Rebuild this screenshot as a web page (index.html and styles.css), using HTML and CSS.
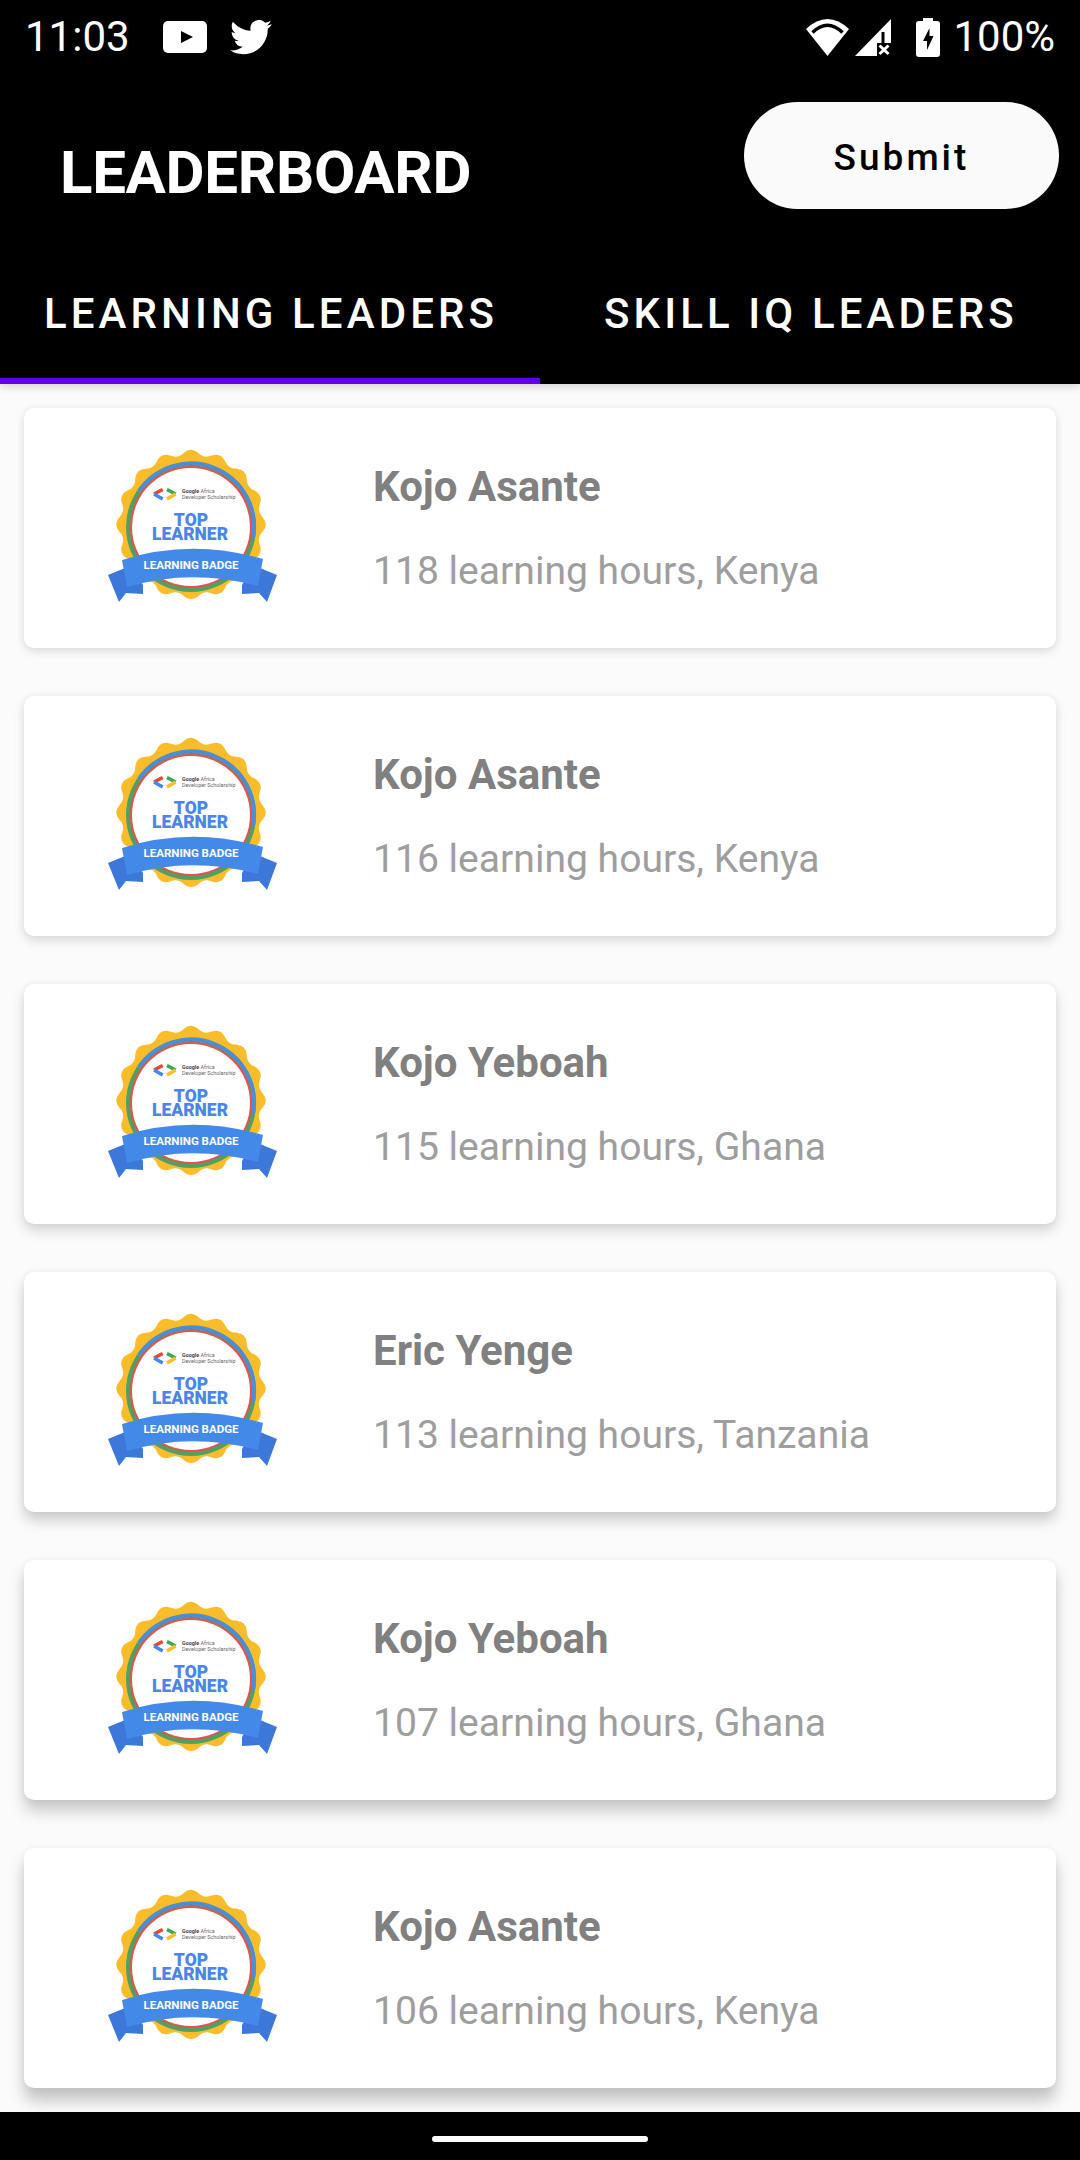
FILE: index.html
```html
<!DOCTYPE html>
<html lang="en">
<head>
<meta charset="utf-8">
<title>Leaderboard</title>
<link rel="stylesheet" href="styles.css">
</head>
<body>
<svg class="defs" width="0" height="0" aria-hidden="true">
  <defs>
    <symbol id="badge" viewBox="0 0 210 190">
      <path transform="translate(101 94.500) scale(1.030)" fill="#fbbc2c" d="M-6.900 -69.700Q0 -75.500 6.900 -69.700Q12.700 -63.800 20.300 -67Q28.900 -69.800 33 -61.700Q36.100 -54 44.400 -54.100Q53.400 -53.400 54.100 -44.400Q54 -36.100 61.700 -33Q69.800 -28.900 67 -20.300Q63.800 -12.700 69.700 -6.900Q75.500 0 69.700 6.900Q63.800 12.700 67 20.300Q69.800 28.900 61.700 33Q54 36.100 54.100 44.400Q53.400 53.400 44.400 54.100Q36.100 54 33 61.700Q28.900 69.800 20.300 67Q12.700 63.800 6.900 69.700Q0 75.500 -6.900 69.700Q-12.700 63.800 -20.300 67Q-28.900 69.800 -33 61.700Q-36.100 54 -44.400 54.100Q-53.400 53.400 -54.100 44.400Q-54 36.100 -61.700 33Q-69.800 28.900 -67 20.300Q-63.800 12.700 -69.700 6.900Q-75.500 0 -69.700 -6.900Q-63.800 -12.700 -67 -20.300Q-69.800 -28.900 -61.700 -33Q-54 -36.100 -54.100 -44.400Q-53.400 -53.400 -44.400 -54.100Q-36.100 -54 -33 -61.700Q-28.900 -69.800 -20.300 -67Q-12.700 -63.800 -6.900 -69.700Z"/>
      <circle cx="101" cy="97" r="65" fill="#4fa063"/>
      <path fill="none" stroke="#4a8fd6" stroke-width="4" d="M49 61A63 63 0 0 1 163 108"/>
      <circle cx="101" cy="97" r="61" fill="#e5534b"/>
      <circle cx="101" cy="97" r="59" fill="#fff"/>
      <path fill="none" stroke="#ea4335" stroke-width="3.500" d="M72.700 59.500L64 64"/>
      <path fill="none" stroke="#4285f4" stroke-width="3.500" d="M64 64L72.700 69"/>
      <path fill="none" stroke="#34a853" stroke-width="3.500" d="M77 59.500L85.500 64"/>
      <path fill="none" stroke="#fbbc2c" stroke-width="3.500" d="M85.500 64L77 69"/>
      <text class="bd-small" x="92" y="62.500"><tspan class="bd-google">Google</tspan> Africa</text>
      <text class="bd-small" x="92" y="68.500">Developer Scholarship</text>
      <text class="bd-top" x="101" y="96">TOP</text>
      <text class="bd-top" x="100" y="110">LEARNER</text>
      <path fill="#3b78d8" d="M18 145L40 136L53 155V164L36 163L29 172Z"/>
      <path fill="#3b78d8" d="M187 145L165 136L152 155V164L169 163L177 172Z"/>
      <path fill="#4389e8" d="M32 130Q101 108 173 129L168 156Q101 138 37 157Z"/>
      <text class="bd-label" x="101" y="139">LEARNING BADGE</text>
    </symbol>
  </defs>
</svg>

<div class="screen">
  <header class="app-top">
    <div class="status">
      <div class="status-left">
        <span class="status-text">11:03</span>
        <svg class="ic-yt" viewBox="0 0 44 32"><rect width="44" height="32" rx="5" fill="#fff"/><path fill="#000" d="M18 10L30 16L18 22Z"/></svg>
        <svg class="ic-tw" viewBox="0 2.700 24 19"><path fill="#fff" d="M23.953 4.570a10 10 0 0 1-2.825.775 4.958 4.958 0 0 0 2.163-2.723c-.951.555-2.005.959-3.127 1.184a4.920 4.920 0 0 0-8.384 4.482C7.690 8.095 4.067 6.130 1.640 3.162a4.822 4.822 0 0 0-.666 2.475c0 1.710.870 3.213 2.188 4.096a4.904 4.904 0 0 1-2.228-.616v.06a4.923 4.923 0 0 0 3.946 4.827 4.996 4.996 0 0 1-2.212.085 4.936 4.936 0 0 0 4.604 3.417 9.867 9.867 0 0 1-6.102 2.105c-.39 0-.779-.023-1.170-.067a13.995 13.995 0 0 0 7.557 2.209c9.053 0 13.998-7.496 13.998-13.985 0-.21 0-.42-.015-.63A9.935 9.935 0 0 0 24 4.590z"/></svg>
      </div>
      <div class="status-right">
        <svg class="ic-wifi" viewBox="0 0 45 37"><path fill="#fff" d="M22.500 37L1 10Q22.500 -10 44 10Z"/><path fill="none" stroke="#000" stroke-width="3.500" d="M7.500 13.500Q22.500 -1 37.500 13.500"/></svg>
        <svg class="ic-signal" viewBox="0 0 36 37"><path fill="#fff" d="M36 0V37H0Z"/><path fill="#000" d="M26.500 13H29.500V24H26.500Z"/><path fill="#000" d="M22 24H36V37H22Z"/><path fill="none" stroke="#fff" stroke-width="3" d="M24.500 26.500L33.500 35M33.500 26.500L24.500 35"/></svg>
        <svg class="ic-batt" viewBox="0 0 24 39"><path fill="#fff" d="M7 0H17V3H21A3 3 0 0 1 24 6V36A3 3 0 0 1 21 39H3A3 3 0 0 1 0 36V6A3 3 0 0 1 3 3H7Z"/><path fill="#000" d="M13.500 10L7 23H11V32L17.500 18H13.500Z"/></svg>
        <span class="status-text">100%</span>
      </div>
    </div>
    <div class="toolbar">
      <h1 class="title">LEADERBOARD</h1>
      <button class="submit">Submit</button>
    </div>
    <nav class="tabs">
      <div class="tab tab-active">LEARNING LEADERS</div>
      <div class="tab">SKILL IQ LEADERS</div>
    </nav>
  </header>

  <main class="list">
    <article class="card">
      <svg class="badge"><use href="#badge"/></svg>
      <div class="info"><div class="name">Kojo Asante</div><div class="hours">118 learning hours, Kenya</div></div>
    </article>
    <article class="card">
      <svg class="badge"><use href="#badge"/></svg>
      <div class="info"><div class="name">Kojo Asante</div><div class="hours">116 learning hours, Kenya</div></div>
    </article>
    <article class="card">
      <svg class="badge"><use href="#badge"/></svg>
      <div class="info"><div class="name">Kojo Yeboah</div><div class="hours">115 learning hours, Ghana</div></div>
    </article>
    <article class="card">
      <svg class="badge"><use href="#badge"/></svg>
      <div class="info"><div class="name">Eric Yenge</div><div class="hours">113 learning hours, Tanzania</div></div>
    </article>
    <article class="card">
      <svg class="badge"><use href="#badge"/></svg>
      <div class="info"><div class="name">Kojo Yeboah</div><div class="hours">107 learning hours, Ghana</div></div>
    </article>
    <article class="card">
      <svg class="badge"><use href="#badge"/></svg>
      <div class="info"><div class="name">Kojo Asante</div><div class="hours">106 learning hours, Kenya</div></div>
    </article>
  </main>

  <footer class="navbar"><div class="home"></div></footer>
</div>
</body>
</html>
```
FILE: styles.css
```css
* { box-sizing: border-box; }
html, body { margin: 0; padding: 0; }
body { width: 1080px; height: 2160px; overflow: hidden; background: #fbfbfb; font-family: Roboto, "Liberation Sans", sans-serif; }
.defs { position: absolute; }
.screen { width: 1080px; height: 2160px; display: flex; flex-direction: column; }
.app-top { background: #000; color: #fff; height: 384px; flex: none; box-shadow: 0 3px 8px rgba(0,0,0,.16); position: relative; z-index: 2; display: flex; flex-direction: column; }
.status { height: 72px; display: flex; justify-content: space-between; align-items: center; padding: 2px 25px 0 25px; }
.status-left, .status-right { display: flex; align-items: center; }
.status-text { font-size: 42px; line-height: 72px; color: #fff; }
.ic-yt { width: 44px; height: 32px; margin-left: 33px; }
.ic-tw { width: 42px; height: 35px; margin-left: 23px; }
.ic-wifi { width: 45px; height: 37px; }
.ic-signal { width: 36px; height: 37px; margin-left: 5px; }
.ic-batt { width: 24px; height: 39px; margin-left: 25px; margin-right: 13px; }
.toolbar { height: 168px; display: flex; align-items: center; justify-content: space-between; padding: 0 21px 0 60px; }
.title { margin: 33px 0 0; font-size: 60px; font-weight: 700; line-height: 70px; letter-spacing: -.3px; }
.submit { width: 315px; height: 107px; margin-top: -2px; border: 0; border-radius: 54px; background: #fafafa; color: #000; font-family: inherit; font-size: 37px; font-weight: 500; letter-spacing: 3px; padding: 5px 0 0; }
.tabs { height: 144px; display: flex; }
.tab { width: 540px; padding: 8px 0 0 2px; display: flex; align-items: center; justify-content: center; font-size: 42px; font-weight: 500; letter-spacing: 4.100px; border-bottom: 6px solid transparent; }
.tab-active { border-bottom-color: #6200ee; }
.list { flex: 1; padding-top: 24px; display: flex; flex-direction: column; gap: 48px; }
.card { height: 240px; flex: none; margin: 0 24px; background: #fff; border-radius: 10px; display: flex; align-items: center; box-shadow: 0 0 8px rgba(0,0,0,.05), 0 4px 10px rgba(0,0,0,.1); }
.card:nth-child(2) { box-shadow: 0 0 8px rgba(0,0,0,.05), 0 5px 12px rgba(0,0,0,.12); }
.card:nth-child(3) { box-shadow: 0 0 8px rgba(0,0,0,.05), 0 7px 13px rgba(0,0,0,.15); }
.card:nth-child(4) { box-shadow: 0 0 8px rgba(0,0,0,.05), 0 9px 14px rgba(0,0,0,.18); }
.card:nth-child(5) { box-shadow: 0 0 8px rgba(0,0,0,.05), 0 11px 15px rgba(0,0,0,.2); }
.card:nth-child(6) { box-shadow: 0 0 8px rgba(0,0,0,.05), 0 13px 16px rgba(0,0,0,.22); }
.badge { width: 210px; height: 190px; flex: none; margin: -6px 0 0 66px; }
.info { margin-left: 73px; display: flex; flex-direction: column; }
.name { font-size: 42px; font-weight: 700; color: #808080; line-height: 50px; }
.hours { font-size: 39.100px; color: #9e9e9e; line-height: 46px; margin-top: 36px; }
.navbar { height: 48px; flex: none; background: #000; display: flex; justify-content: center; padding-top: 24px; position: relative; z-index: 3; }
.home { width: 216px; height: 6px; border-radius: 3px; background: #fff; }
.bd-small { font-size: 5.400px; fill: #666; font-family: Roboto, sans-serif; }
.bd-google { font-weight: 700; fill: #444; }
.bd-top { font-size: 17.500px; font-weight: 900; fill: #4a86e8; text-anchor: middle; font-family: Roboto, sans-serif; }
.bd-label { font-size: 11.500px; font-weight: 700; fill: #fff; text-anchor: middle; font-family: Roboto, sans-serif; }
```
